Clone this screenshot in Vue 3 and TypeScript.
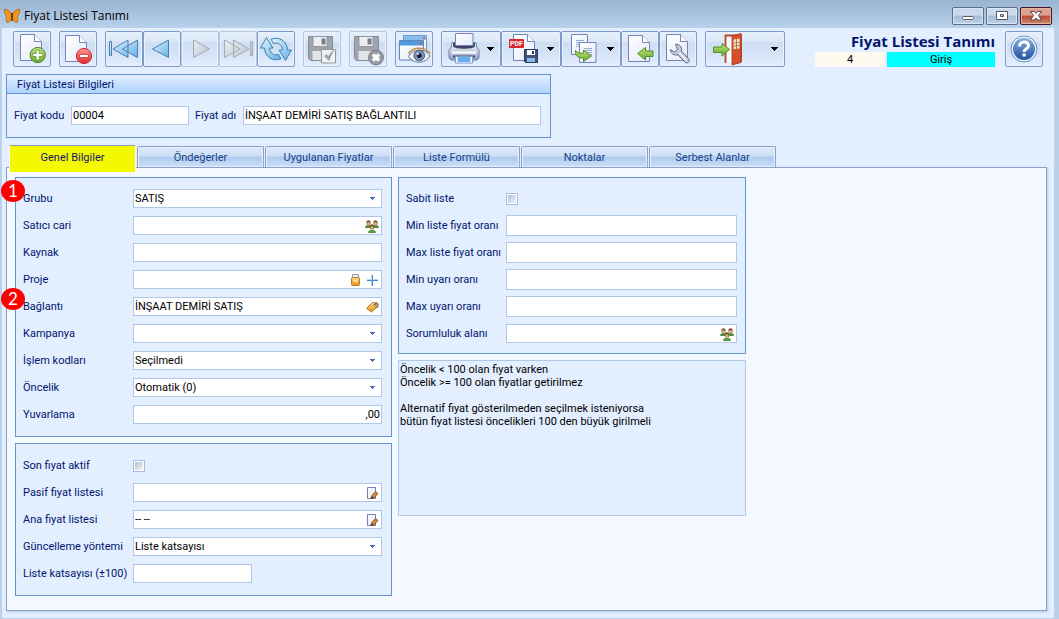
<script setup lang="ts">
import { reactive, ref } from 'vue'

type FieldKind = 'text' | 'select' | 'check'
type FieldIcon = 'people' | 'lock' | 'plus' | 'tag' | 'edit'

interface Field {
  id: string
  label: string
  kind: FieldKind
  icons?: FieldIcon[]
  badge?: number
  modifier?: string
}

const tabs: string[] = [
  'Genel Bilgiler',
  'Öndeğerler',
  'Uygulanan Fiyatlar',
  'Liste Formülü',
  'Noktalar',
  'Serbest Alanlar',
]
const activeTab = ref(0)

const general: Field[] = [
  { id: 'grubu', label: 'Grubu', kind: 'select', badge: 1 },
  { id: 'satici', label: 'Satıcı cari', kind: 'text', icons: ['people'] },
  { id: 'kaynak', label: 'Kaynak', kind: 'text' },
  { id: 'proje', label: 'Proje', kind: 'text', icons: ['lock', 'plus'] },
  { id: 'baglanti', label: 'Bağlantı', kind: 'text', icons: ['tag'], badge: 2 },
  { id: 'kampanya', label: 'Kampanya', kind: 'select' },
  { id: 'islem', label: 'İşlem kodları', kind: 'select' },
  { id: 'oncelik', label: 'Öncelik', kind: 'select' },
  { id: 'yuvarlama', label: 'Yuvarlama', kind: 'text', modifier: 'numeric' },
]

const lists: Field[] = [
  { id: 'sonfiyat', label: 'Son fiyat aktif', kind: 'check' },
  { id: 'pasif', label: 'Pasif fiyat listesi', kind: 'text', icons: ['edit'] },
  { id: 'ana', label: 'Ana fiyat listesi', kind: 'text', icons: ['edit'] },
  { id: 'yontem', label: 'Güncelleme yöntemi', kind: 'select' },
  { id: 'katsayi', label: 'Liste katsayısı (±100)', kind: 'text', modifier: 'short' },
]

const limits: Field[] = [
  { id: 'sabit', label: 'Sabit liste', kind: 'check' },
  { id: 'minliste', label: 'Min liste fiyat oranı', kind: 'text', modifier: 'tall' },
  { id: 'maxliste', label: 'Max liste fiyat oranı', kind: 'text', modifier: 'tall' },
  { id: 'minuyari', label: 'Min uyarı oranı', kind: 'text', modifier: 'tall' },
  { id: 'maxuyari', label: 'Max uyarı oranı', kind: 'text', modifier: 'tall' },
  { id: 'sorumluluk', label: 'Sorumluluk alanı', kind: 'text', icons: ['people'] },
]

const columns: { name: string; panels: Field[][] }[] = [
  { name: 'main', panels: [general, lists] },
  { name: 'side', panels: [limits] },
]

const values = reactive<Record<string, string>>({
  grubu: 'SATIŞ',
  satici: '',
  kaynak: '',
  proje: '',
  baglanti: 'İNŞAAT DEMİRİ SATIŞ',
  kampanya: '',
  islem: 'Seçilmedi',
  oncelik: 'Otomatik (0)',
  yuvarlama: ',00',
  pasif: '',
  ana: '-- --',
  yontem: 'Liste katsayısı',
  katsayi: '',
  minliste: '',
  maxliste: '',
  minuyari: '',
  maxuyari: '',
  sorumluluk: '',
})
const checks = reactive<Record<string, boolean>>({ sonfiyat: false, sabit: false })

const code = ref('00004')
const priceName = ref('İNŞAAT DEMİRİ SATIŞ BAĞLANTILI')
const note = [
  'Öncelik < 100 olan fiyat varken',
  'Öncelik >= 100 olan fiyatlar getirilmez',
  '',
  'Alternatif fiyat gösterilmeden seçilmek isteniyorsa',
  'bütün fiyat listesi öncelikleri 100 den büyük girilmeli',
].join('\n')
</script>

<template>
  <div class="window">
    <svg class="defs" width="0" height="0" aria-hidden="true">
      <defs>
        <linearGradient id="gPage" x1="0" y1="0" x2="1" y2="1">
          <stop offset="0" stop-color="#fff" /><stop offset="1" stop-color="#e4e9fa" />
        </linearGradient>
        <linearGradient id="gBlue" x1="0" y1="0" x2="1" y2="1">
          <stop offset="0" stop-color="#e2f5fd" /><stop offset="1" stop-color="#64b0e6" />
        </linearGradient>
        <linearGradient id="gGray" x1="0" y1="0" x2="1" y2="1">
          <stop offset="0" stop-color="#eceff4" /><stop offset="1" stop-color="#b9c1cd" />
        </linearGradient>
        <linearGradient id="gGreen" x1="0" y1="0" x2="0" y2="1">
          <stop offset="0" stop-color="#c0e47c" /><stop offset="1" stop-color="#67a92e" />
        </linearGradient>
        <linearGradient id="gRed" x1="0" y1="0" x2="0" y2="1">
          <stop offset="0" stop-color="#ff9a92" /><stop offset="1" stop-color="#e3262c" />
        </linearGradient>
        <linearGradient id="gSteel" x1="0" y1="0" x2="0" y2="1">
          <stop offset="0" stop-color="#fff" /><stop offset="1" stop-color="#8e9cc2" />
        </linearGradient>
        <linearGradient id="gHelp" x1="0" y1="0" x2="0" y2="1">
          <stop offset="0" stop-color="#8aaee2" /><stop offset="1" stop-color="#204f9e" />
        </linearGradient>
        <linearGradient id="gOrange" x1="0" y1="0" x2="0" y2="1">
          <stop offset="0" stop-color="#ffdc85" /><stop offset="1" stop-color="#e58e20" />
        </linearGradient>
      </defs>
    </svg>

    <header class="titlebar">
      <svg class="logo" width="16" height="16" viewBox="0 0 16 16" aria-hidden="true">
        <path d="M7.600 6C6 3 3 1 .5 1.200.3 4 1 7 3 8.200 1.600 9.500 2 12.600 3 14.300c2.200.5 4-1.500 4.800-5.300zM8.400 6C10 3 13 1 15.500 1.200c.2 2.800-.5 5.800-2.500 7 1.400 1.300 1 4.400 0 6.100-2.200.5-4-1.500-4.800-5.300z" fill="#f59d1a" stroke="#a3540c" stroke-width=".7" />
        <path d="M3 3.500l4 4L4 12M13 3.500l-4 4 3 4.500" fill="none" stroke="#d9740e" stroke-width=".7" />
        <path d="M8 5v8" stroke="#43200a" stroke-width="1.300" />
      </svg>
      <h1>Fiyat Listesi Tanımı</h1>
      <div class="controls">
        <button type="button" aria-label="Simge durumuna küçült">
          <svg width="30" height="16" viewBox="0 0 30 16"><rect x="9.500" y="8.500" width="11" height="3" rx="1" fill="#fff" stroke="#545c68" /></svg>
        </button>
        <button type="button" aria-label="Ekranı kapla">
          <svg width="30" height="16" viewBox="0 0 30 16"><path d="M9.500 3.500h11v8h-11zM13.500 6.500v2h3v-2z" fill="#fff" fill-rule="evenodd" stroke="#545c68" /></svg>
        </button>
        <button type="button" class="close" aria-label="Kapat">
          <svg width="30" height="16" viewBox="0 0 30 16"><path d="M9.500 3.500h4l1.500 2 1.500-2h4L17.500 7.500l3 4.500h-4L15 10l-1.500 2h-4l3-4.500z" fill="#fff" stroke="#59414c" /></svg>
        </button>
      </div>
    </header>

    <main class="body">
      <div class="top">
        <div class="toolbar" role="toolbar" aria-label="Araç çubuğu">
          <div class="group">
            <button type="button" class="tool" aria-label="Yeni">
              <svg width="36" height="34" viewBox="1 1 36 34">
                <path d="M7.500 3.500h14l7 7v19h-21z" fill="url(#gPage)" stroke="#7484b8" /><path d="M21.500 3.500v7h7" fill="#fff" stroke="#7484b8" />
                <circle cx="24.700" cy="24" r="7.600" fill="url(#gGreen)" stroke="#4a7f1c" />
                <path d="M23.200 19h3v3.500h3.500v3h-3.500V29h-3v-3.500h-3.500v-3h3.500z" fill="#fff" stroke="#5b9128" stroke-width=".7" />
              </svg>
            </button>
          </div>
          <div class="group">
            <button type="button" class="tool" aria-label="Sil">
              <svg width="36" height="34" viewBox="1 1 36 34">
                <path d="M6.500 4.500h14l7 7v19h-21z" fill="url(#gPage)" stroke="#7484b8" /><path d="M20.500 4.500v7h7" fill="#fff" stroke="#7484b8" />
                <circle cx="25" cy="25" r="7.600" fill="url(#gRed)" stroke="#cf2a2e" />
                <path d="M20.500 23.500h9v3h-9z" fill="#fff" stroke="#c22" stroke-width=".7" />
              </svg>
            </button>
          </div>
          <div class="group">
            <button type="button" class="tool" aria-label="İlk kayıt">
              <svg width="36" height="34" viewBox="1 1 36 34" fill="url(#gBlue)" stroke="#4a7fb5">
                <path d="M4.500 10.500h2v14h-2zM23 9v17.500L8 18zM32.500 9v17.500l-15-8.500z" />
              </svg>
            </button>
            <button type="button" class="tool" aria-label="Önceki kayıt">
              <svg width="36" height="34" viewBox="1 1 36 34" fill="url(#gBlue)" stroke="#4a7fb5"><path d="M25.500 9v17.500L9.500 18z" /></svg>
            </button>
            <button type="button" class="tool off" disabled aria-label="Sonraki kayıt">
              <svg width="36" height="34" viewBox="1 1 36 34" fill="url(#gGray)" stroke="#a3abb6"><path d="M12.500 9v17.500l16-8.500z" /></svg>
            </button>
            <button type="button" class="tool off" disabled aria-label="Son kayıt">
              <svg width="36" height="34" viewBox="1 1 36 34" fill="url(#gGray)" stroke="#a3abb6">
                <path d="M5.500 9v17.500l15.500-8.500zM14.500 9v17.500L30 18zM31.500 10.500h2v14h-2z" />
              </svg>
            </button>
            <button type="button" class="tool" aria-label="Yenile">
              <svg width="36" height="34" viewBox="1 1 36 34" fill="url(#gBlue)" stroke="#3f7fae" stroke-linejoin="round">
                <path d="M9.500 6.500L16 17h-3.500c.2 4 3 6.700 6.500 7l2.500-.6 2.500 4.400c-8 3.200-16.300-2-16.500-10.800H3.500z" />
                <path d="M28.500 29.500L22 19h3.500c-.2-4-3-6.700-6.500-7l-2.500.6L14 8.200c8-3.200 16.300 2 16.500 10.800H34.500z" />
              </svg>
            </button>
          </div>
          <div class="group">
            <button type="button" class="tool off" disabled aria-label="Kaydet">
              <svg width="36" height="34" viewBox="1 1 36 34">
                <path d="M5.500 5.500h24v24h-22l-2-2z" fill="#a0a5ad" stroke="#858b94" /><path d="M10 5.500h14v10H10z" fill="#eceef1" stroke="#92979f" /><path d="M18.500 7.500h4v6h-4z" fill="#787e87" /><path d="M9.500 20h16v9h-16z" fill="#e2e5e8" />
                <path d="M18.500 18.500h14v13.500h-14z" fill="#f1f2f4" stroke="#8f959e" /><path d="M21.500 25l2-1.500 2 2.500c1-2.500 2.500-4.500 5-6.500-1.800 3-3 6-4.500 10z" fill="#a0a6af" stroke="#868c95" stroke-width=".6" />
              </svg>
            </button>
          </div>
          <div class="group">
            <button type="button" class="tool off" disabled aria-label="Vazgeç">
              <svg width="36" height="34" viewBox="1 1 36 34">
                <path d="M5.500 5.500h24v24h-22l-2-2z" fill="#a0a5ad" stroke="#858b94" /><path d="M10 5.500h14v10H10z" fill="#eceef1" stroke="#92979f" /><path d="M18.500 7.500h4v6h-4z" fill="#787e87" /><path d="M9.500 20h16v9h-16z" fill="#e2e5e8" />
                <circle cx="27" cy="26.500" r="7.400" fill="#979ca4" stroke="#747a83" />
                <path d="M24 23.500l6 6M30 23.500l-6 6" stroke="#fff" stroke-width="3.400" />
              </svg>
            </button>
          </div>
          <div class="group">
            <button type="button" class="tool" aria-label="Görünüm">
              <svg width="36" height="34" viewBox="1 1 36 34">
                <path d="M8.500 4.500h23v19h-23z" fill="#f2f7ff" stroke="#6b97cf" /><path d="M9 5h22v4H9z" fill="#87bdec" /><path d="M28 6h2v2h-2z" fill="#e65a47" />
                <path d="M4.500 9.500h24v19.500h-24z" fill="url(#gPage)" stroke="#6384bd" /><path d="M5 10h23v4.500H5z" fill="#4c9be0" /><path d="M24.500 11.200h2v2h-2z" fill="#f0503c" />
                <path d="M13.500 25.500C17 18 30 16.500 35 25c-5 8-16.500 8.500-21.500.5z" fill="#edf0f8" stroke="#68708c" />
                <path d="M13.500 22.500C18 15.500 30 15.500 35 22.500" fill="none" stroke="#c68c42" stroke-width="1.600" />
                <circle cx="24.300" cy="24.500" r="5.300" fill="#7c93b6" stroke="#46587b" /><circle cx="24.300" cy="24.500" r="2.500" fill="#17203a" /><circle cx="22.800" cy="22.800" r="1.100" fill="#fff" />
              </svg>
            </button>
          </div>
          <div class="group">
            <button type="button" class="tool wide" aria-label="Yazdır">
              <svg width="58" height="34" viewBox="1 1 58 34">
                <path d="M11 11.500h24l1 5.500 2 1.500V27l-2 2H10l-2-2v-8.500l2-1.500z" fill="url(#gSteel)" stroke="#7280aa" />
                <path d="M12 12h22v3.500c-2 3-20 3-22 0z" fill="#3a4563" />
                <path d="M14.500 2.500h17.500v12H14.500z" fill="url(#gPage)" stroke="#7484b8" />
                <path d="M11 21.500h24" stroke="#fff" stroke-width="2" /><path d="M12 25.500h22" stroke="#46547c" stroke-width="2" />
                <path d="M14.500 25.500h17v6.500h-17z" fill="#fff" stroke="#8a9ac4" /><path d="M16.500 26h13v5h-13z" fill="#64b2ee" />
                <path d="M46 16h7v1h-1v1h-1v1h-1v1h-1v-1h-1v-1h-1v-1h-1z" fill="#000" />
              </svg>
            </button>
            <button type="button" class="tool wide" aria-label="PDF kaydet">
              <svg width="58" height="34" viewBox="1 1 58 34">
                <path d="M12.500 3.500h14l7 7v19h-21z" fill="url(#gPage)" stroke="#7484b8" /><path d="M26.500 3.500v7h7" fill="#fff" stroke="#7484b8" />
                <rect x="8" y="8" width="15" height="9" rx="1" fill="#d8262c" /><text x="15.500" y="15" text-anchor="middle" font-size="7" font-weight="700" fill="#fff">PDF</text>
                <path d="M23.500 18.500h13v13h-12l-1-1z" fill="#46537c" stroke="#2d3858" /><path d="M26 19h8v5h-8z" fill="#fff" /><path d="M31 20h2v3h-2z" fill="#2f3a5c" /><path d="M26 27h8v4h-8z" fill="#83c0ee" />
                <path d="M46 16h7v1h-1v1h-1v1h-1v1h-1v-1h-1v-1h-1v-1h-1z" fill="#000" />
              </svg>
            </button>
            <button type="button" class="tool wide" aria-label="Kopyala">
              <svg width="58" height="34" viewBox="1 1 58 34">
                <path d="M10.500 3.500h16v20h-16z" fill="url(#gPage)" stroke="#7484b8" /><path d="M15 9.500h8M15 11.500h8M15 13.500h8M15 15.500h8" stroke="#92abde" />
                <path d="M18.500 11.500h16.500v20h-16.500z" fill="url(#gPage)" stroke="#7484b8" /><path d="M23 17.500h8M23 19.500h8M23 21.500h8M25 23.500h6" stroke="#92abde" />
                <path d="M14.500 19.500c1.500 2.500 5 3 8 2.800V19l8 6-8 5.500V27c-5 .2-8.500-2-8-7.500z" fill="url(#gGreen)" stroke="#4f8f24" />
                <path d="M46 16h7v1h-1v1h-1v1h-1v1h-1v-1h-1v-1h-1v-1h-1z" fill="#000" />
              </svg>
            </button>
            <button type="button" class="tool" aria-label="İçe aktar">
              <svg width="36" height="34" viewBox="1 1 36 34">
                <path d="M7.500 4.500h14l7 7v19h-21z" fill="url(#gPage)" stroke="#7484b8" /><path d="M21.500 4.500v7h7" fill="#fff" stroke="#7484b8" />
                <path d="M16.500 22.500l8-6v3.500h7.500v5.500h-7.500V29z" fill="url(#gGreen)" stroke="#4f8f24" />
              </svg>
            </button>
            <button type="button" class="tool" aria-label="Ayarlar">
              <svg width="36" height="34" viewBox="1 1 36 34">
                <path d="M7.500 3.500h14l7 7v19h-21z" fill="url(#gPage)" stroke="#7484b8" /><path d="M21.500 3.500v7h7" fill="#fff" stroke="#7484b8" />
                <path d="M16.500 13.500c4-.6 7 2.500 5.800 6.500l7.700 8.200c1.300 2.500-1.600 4.800-3.700 3.300L19 23.800c-4 1-7.500-1.300-7.500-5.300l3.800 2.500 3.200-2.500z" fill="#c4cbdc" stroke="#5f6c8c" /><path d="M20.500 22l6.500 7" stroke="#f5f7fc" stroke-width="1.400" />
              </svg>
            </button>
          </div>
          <div class="group">
            <button type="button" class="tool extra" aria-label="Çıkış">
              <svg width="78" height="34" viewBox="1 1 78 34">
                <path d="M20.500 32V4.500h15.500V31" fill="#f7faff" stroke="#b9482a" stroke-width="1.800" />
                <path d="M27 5l9-2.500v29L27 34z" fill="#d5502c" stroke="#a5351a" stroke-width=".8" />
                <path d="M28.500 8.500l6-1v10l-6 .8z" fill="#f0e4c4" /><path d="M31.500 8v10M28.500 12l6-.6M28.500 15l6-.5" stroke="#a8623e" stroke-width=".8" />
                <path d="M24.500 18.500l-7.500-6V16H8.500v5.500H17V25z" fill="url(#gGreen)" stroke="#4f8f24" />
                <path d="M66 16h7v1h-1v1h-1v1h-1v1h-1v-1h-1v-1h-1v-1h-1z" fill="#000" />
              </svg>
            </button>
          </div>
        </div>
        <div class="status">
          <h2>Fiyat Listesi Tanımı</h2>
          <div class="chips">
            <span class="chip">4</span>
            <span class="chip mode">Giriş</span>
          </div>
        </div>
        <button type="button" class="tool" aria-label="Yardım">
          <svg width="36" height="34" viewBox="1 1 36 34">
            <circle cx="19" cy="18" r="13" fill="#eaf1fb" stroke="#6a8cc3" /><circle cx="19" cy="18" r="11" fill="url(#gHelp)" />
            <path d="M14.500 15.500c0-6 9-6 9-.8 0 3.300-4.300 3-4.300 6.300" fill="none" stroke="#fff" stroke-width="3" /><rect x="17.500" y="22.500" width="3.200" height="3" fill="#fff" />
          </svg>
        </button>
      </div>

      <section class="info">
        <h3>Fiyat Listesi Bilgileri</h3>
        <div class="info-row">
          <label for="kod">Fiyat kodu</label>
          <input id="kod" v-model="code" class="box code" type="text">
          <label for="ad">Fiyat adı</label>
          <input id="ad" v-model="priceName" class="box name" type="text">
        </div>
      </section>

      <div class="tabs" role="tablist">
        <button
          v-for="(tab, i) in tabs"
          :key="tab"
          type="button"
          role="tab"
          class="tab"
          :class="{ active: i === activeTab }"
          :aria-selected="i === activeTab"
          @click="activeTab = i"
        >{{ tab }}</button>
      </div>

      <section class="sheet" role="tabpanel">
        <div v-for="col in columns" :key="col.name" class="column" :class="col.name">
          <div v-for="(panel, p) in col.panels" :key="p" class="panel">
            <div v-for="f in panel" :key="f.id" class="row">
              <span v-if="f.badge" class="badge">{{ f.badge }}</span>
              <label :for="f.id">{{ f.label }}</label>
              <input v-if="f.kind === 'check'" :id="f.id" v-model="checks[f.id]" type="checkbox" class="check">
              <div v-else-if="f.kind === 'select'" class="box field">
                <select :id="f.id" v-model="values[f.id]">
                  <option :value="values[f.id]">{{ values[f.id] }}</option>
                </select>
                <svg class="caret" width="5" height="3" viewBox="0 0 5 3" aria-hidden="true"><path d="M0 0h5v1H4v1H3v1H2V2H1V1H0z" fill="#4571ad" /></svg>
              </div>
              <div v-else class="box field" :class="f.modifier">
                <input :id="f.id" v-model="values[f.id]" type="text">
                <button v-for="icon in f.icons" :key="icon" type="button" class="pick" :aria-label="f.label">
                  <svg v-if="icon === 'people'" width="14" height="14" viewBox="0 0 14 14">
                    <path d="M.5 8.500c0-3 6-3 6 0zM7.500 8.500c0-3 6-3 6 0z" fill="#499537" stroke="#2e7022" stroke-width=".7" />
                    <path d="M1.500 5.500v-3q2-2.500 4 0v3zM8.500 5.500v-3q2-2.500 4 0v3z" fill="#7a4c25" /><circle cx="3.500" cy="4.500" r="1.500" fill="#e2b17e" /><circle cx="10.500" cy="4.500" r="1.500" fill="#e2b17e" />
                    <path d="M3.500 13.500c0-3.500 7-3.500 7 0z" fill="#55a340" stroke="#2e7022" stroke-width=".7" /><path d="M5 10V6.500q2-2.500 4 0V10z" fill="#7a4c25" /><circle cx="7" cy="8.800" r="1.600" fill="#e2b17e" />
                  </svg>
                  <svg v-else-if="icon === 'lock'" width="14" height="14" viewBox="0 0 14 14">
                    <path d="M4.500 5V1.500h6V5" fill="#eef2f8" stroke="#8d96a8" /><rect x="3.500" y="4.500" width="8" height="8" rx="1" fill="url(#gOrange)" stroke="#bd7c20" /><path d="M6 7h3v2H6z" fill="#f9e2a8" />
                  </svg>
                  <svg v-else-if="icon === 'plus'" width="14" height="14" viewBox="0 0 14 14"><path d="M7.500 2v11M2 7.500h11" stroke="#3d85c6" /><path d="M6.500 2v11M2 6.500h11" stroke="#8fb9df" opacity=".6" /></svg>
                  <svg v-else-if="icon === 'tag'" width="14" height="14" viewBox="0 0 14 14">
                    <path d="M1.500 8.500L7.500 2.500l4 .5 1 3.500L6.500 12z" fill="url(#gOrange)" stroke="#b97422" /><circle cx="10" cy="5" r="1.100" fill="#fff" stroke="#80501d" stroke-width=".7" /><path d="M10 5c1-4 4-2 3 1.500-.5 1.500-2 1.500-2.500.5" fill="none" stroke="#5f5a60" />
                  </svg>
                  <svg v-else width="14" height="14" viewBox="0 0 14 14">
                    <path d="M2.500 1.500h8v11h-8z" fill="url(#gPage)" stroke="#7180b8" /><path d="M6 12.500l.5-2.500L10.500 5.500l2.500 2-4 4.500z" fill="#d18a39" stroke="#79451a" stroke-width=".8" /><path d="M5.500 13l1-3 2 1.800z" fill="#443c3c" />
                  </svg>
                </button>
              </div>
            </div>
          </div>
          <textarea v-if="col.name === 'side'" class="note" readonly aria-label="Açıklama" :value="note"></textarea>
        </div>
      </section>
    </main>
  </div>
</template>

<style>
html,
body {
  margin: 0;
  background: #e3eeff;
}
</style>

<style scoped>
.window,
.window * {
  box-sizing: border-box;
}
.window {
  display: flex;
  flex-direction: column;
  min-height: 100vh;
  background: #b9d1ea;
  color: #00156e;
  font: 11px/13px Tahoma, Roboto, sans-serif;
}
.defs {
  position: absolute;
}
h1,
h2,
h3 {
  margin: 0;
  font-weight: 400;
}
button,
input,
select,
textarea {
  margin: 0;
  padding: 0;
  border: 0;
  border-radius: 0;
  font: inherit;
  outline: 0;
}
svg {
  display: block;
  flex: none;
}
.titlebar {
  display: flex;
  align-items: center;
  height: 28px;
  padding: 4px 7px 0 4px;
  background: linear-gradient(#99b4d1, #b9d1ea);
}
.titlebar h1 {
  flex: 1;
  margin-left: 4px;
  color: #000;
  font: 12px/16px "Segoe UI", "Open Sans", sans-serif;
}
.controls {
  display: flex;
  gap: 2px;
}
.controls button {
  width: 32px;
  height: 18px;
  border: 1px solid #5e6f85;
  border-radius: 2px;
  background: linear-gradient(#c9d9eb 45%, #a5bdd8 50%, #bcd2ea);
  box-shadow: inset 0 0 0 1px #dbe7f4;
}
.controls .close {
  border-color: #431422;
  background: linear-gradient(#dca08f 45%, #b84632 50%, #d08a6c);
  box-shadow: inset 0 0 0 1px #e5b5a6;
}
.body {
  display: flex;
  flex: 1;
  flex-direction: column;
  margin: 0 5px 1px 2px;
  padding: 3px 7px 7px 4px;
  background: #e3eeff;
}
.top {
  display: flex;
  align-items: flex-start;
  padding: 0 4px 7px 7px;
}
.toolbar {
  display: flex;
  flex: 1;
  gap: 8px;
}
.group {
  display: flex;
}
.tool {
  flex: none;
  width: 38px;
  height: 36px;
  border: 1px solid #7d9ac8;
  border-radius: 2px;
  background: linear-gradient(#e5effc 0, #dce8f7 28%, #cfdff3 30%, #d3e2f5 60%, #e3eeff);
  box-shadow: inset 0 0 0 1px #e8f1fd;
}
.off {
  border-color: #b3c5df;
}
.wide {
  width: 60px;
}
.extra {
  width: 80px;
}
.status {
  width: 180px;
  margin-right: 10px;
}
.status h2 {
  font: 700 15px/21px "Open Sans", sans-serif;
  text-align: right;
  white-space: nowrap;
}
.chips {
  display: flex;
  gap: 2px;
  color: #000;
  line-height: 15px;
  text-align: center;
}
.chip {
  width: 70px;
  background: #fffaf0;
}
.mode {
  flex: 1;
  background: #0ff;
}
.info {
  align-self: flex-start;
  border: 1px solid #6593cf;
}
.info h3 {
  height: 19px;
  padding-left: 10px;
  border-bottom: 1px solid #6593cf;
  background: linear-gradient(#e3efff, #afd2ff);
  font-size: 11px;
  line-height: 19px;
}
.info-row {
  display: flex;
  align-items: center;
  padding: 12px 9px 12px 7px;
}
.info-row label {
  width: 57px;
  white-space: nowrap;
}
.info-row .code + label {
  width: 48px;
  margin-left: 6px;
}
.box {
  height: 19px;
  border: 1px solid #b0c8e8;
  background: #fff;
  color: #000;
}
.info-row .box {
  padding-left: 1px;
}
.code {
  width: 118px;
}
.name {
  width: 298px;
}
.tabs {
  display: flex;
  align-items: flex-end;
  gap: 1px;
  padding: 7px 0 0 3px;
}
.tab {
  width: 127px;
  height: 21px;
  padding-top: 1px;
  border: 1px solid #8ba0c8;
  border-bottom: 0;
  border-radius: 2px 2px 0 0;
  background: linear-gradient(#dde9f8 0, #cddff5 45%, #b0cbef 50%, #cbdff9);
  box-shadow: inset 0 0 0 1px #e8f1fd;
  color: #15428b;
  white-space: nowrap;
}
.tab.active {
  position: relative;
  height: 27px;
  margin-bottom: -5px;
  padding: 0 0 3px;
  border-color: #8ba0c8 #f4f8ff #f4f800;
  background: #f4f800;
  box-shadow: none;
  color: #14146e;
}
.sheet {
  display: flex;
  flex: 1;
  align-items: flex-start;
  gap: 6px;
  padding: 9px 8px 14px;
  border: 1px solid #8ba0c8;
  background: #f4f8ff;
  box-shadow: 1px 1px 2px #b5c6e0;
}
.column {
  display: flex;
  flex-direction: column;
  gap: 6px;
}
.main {
  width: 377px;
}
.side {
  width: 348px;
}
.panel {
  display: flex;
  flex-direction: column;
  gap: 8px;
  padding: 11px 9px 12px 7px;
  border: 1px solid #6593cf;
  background: #e3eeff;
}
.main .panel + .panel {
  padding-top: 12px;
}
.side .panel {
  padding: 11px 8px 10px 7px;
}
.row {
  position: relative;
  display: flex;
  align-items: center;
  height: 19px;
}
.row label {
  flex: none;
  width: 110px;
  white-space: nowrap;
}
.side label {
  width: 100px;
}
.field {
  display: flex;
  flex: 1;
  align-items: center;
  min-width: 0;
  padding-right: 1px;
}
.field input,
.field select {
  flex: 1;
  min-width: 0;
  height: 100%;
  padding: 0 1px;
  background: none;
  color: #000;
  appearance: none;
}
.caret {
  margin-right: 5px;
}
.numeric input {
  padding: 0;
  text-align: right;
}
.short {
  flex: none;
  width: 119px;
}
.tall {
  height: 21px;
}
.pick {
  margin: 0 1px 0 2px;
  background: none;
}
.check {
  width: 12px;
  height: 12px;
  padding: 1px;
  border: 1px solid #a3bee2;
  background: linear-gradient(135deg, #b4bac4, #f8f9fb) content-box, #fff;
  appearance: none;
}
.check:checked {
  background: #4571ad;
}
.badge {
  position: absolute;
  top: -9px;
  left: -22px;
  width: 24px;
  height: 22px;
  border-radius: 50%;
  background: #f00;
  color: #fff;
  font: 17px/22px Lato, sans-serif;
  text-align: center;
}
.note {
  display: block;
  width: 100%;
  height: 156px;
  padding: 2px 1px;
  border: 1px solid #b0c8e8;
  background: #e3eeff;
  color: #000;
  resize: none;
}
</style>
